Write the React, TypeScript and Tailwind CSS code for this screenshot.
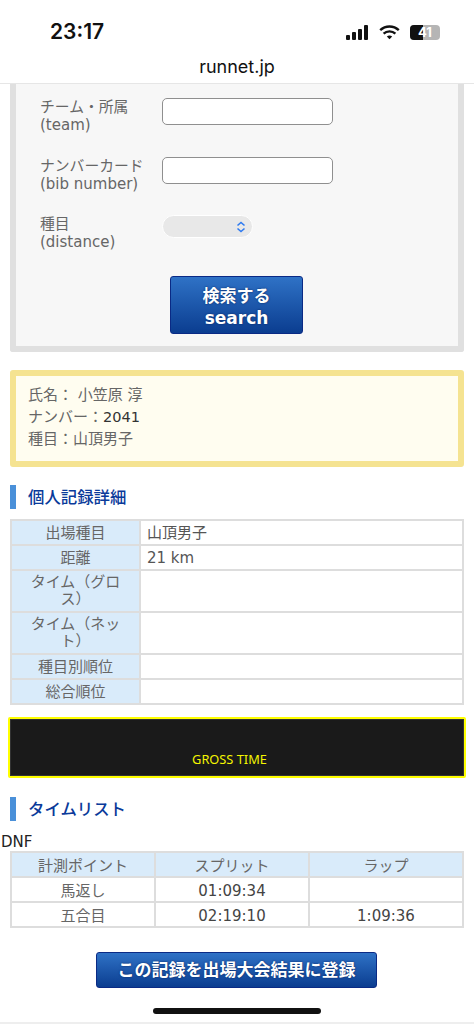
const cjk = "font-['DejaVu_Sans','Noto_Sans_CJK_JP',sans-serif]";

function StatusIcons() {
  return (
    <div className="mb-[3px] flex items-center gap-[10px]">
      <svg width="23" height="15" viewBox="0 0 23 15" fill="#111">
        <rect x="0" y="10" width="4" height="5" rx="1" />
        <rect x="6" y="7" width="4" height="8" rx="1" />
        <rect x="12" y="4" width="4" height="11" rx="1" />
        <rect x="18" y="0" width="4" height="15" rx="1" />
      </svg>
      <svg width="21" height="15" viewBox="0 0 21 15" fill="none" stroke="#111" strokeWidth="2.4">
        <path d="M1.2 5.2C6.5 0.3 14.5 0.3 19.8 5.2" />
        <path d="M4.6 8.6C7.9 5.6 13.1 5.6 16.4 8.6" />
        <path d="M10.5 14.2L7.8 11.4C9.4 10.2 11.6 10.2 13.2 11.4Z" fill="#111" stroke="none" />
      </svg>
      <div className="relative flex h-[15px] w-[30px] overflow-hidden rounded-[4px] bg-[#b5b5b5]">
        <div className="h-full w-[13px] bg-[#111]" />
        <span className="absolute inset-0 flex items-center justify-center font-['Inter',sans-serif] text-[13px] font-bold text-white">
          41
        </span>
      </div>
    </div>
  );
}

function FormRow({ label, sub, children }: { label: string; sub: string; children: React.ReactNode }) {
  return (
    <div className="flex h-[58.5px] items-start">
      <div className="-mt-[1px] w-[122px] text-[15px] leading-[19px] text-[#666]">
        <div className="text-[14.8px]">{label}</div>
        <div>{sub}</div>
      </div>
      {children}
    </div>
  );
}

function Heading({ title }: { title: string }) {
  return (
    <div className="mx-[10px] flex h-[24px] items-center border-l-[6px] border-[#4a90d9] pl-[12px] pt-[2px] text-[16.4px] font-medium text-[#0a3a9a]">
      {title}
    </div>
  );
}

const blueBtn =
  "block rounded-[3px] border border-[#0a2a85] bg-gradient-to-b from-[#2f72c6] to-[#0b3d90] text-center font-bold text-white [text-shadow:0_0_2px_#06245f]";

const detailRows: [string, string, boolean?][] = [
  ['出場種目', '山頂男子'],
  ['距離', '21 km'],
  ['タイム（グロス）', '', true],
  ['タイム（ネット）', '', true],
  ['種目別順位', ''],
  ['総合順位', ''],
];

const splits = [
  ['馬返し', '01:09:34', ''],
  ['五合目', '02:19:10', '1:09:36'],
];

export default function App() {
  return (
    <div className={`relative h-[1024px] overflow-hidden bg-white text-[15px] text-[#333] ${cjk}`}>
      {/* phone chrome */}
      <div className="flex h-[54px] items-end justify-between pl-[50px] pr-[34px] pb-[11px]">
        <span className="-mb-[1px] font-['Inter',sans-serif] text-[21px] font-semibold leading-[24px] text-[#111]">23:17</span>
        <StatusIcons />
      </div>
      <div className="flex h-[30px] justify-center border-b border-[#e6e6e6] font-['Inter',sans-serif] text-[18px] leading-[25px] text-[#111]">
        runnet.jp
      </div>

      {/* search form */}
      <div className="mx-[10px] h-[268px] rounded-b-[3px] border-x-[6px] border-b-[6px] border-[#e0e0e0] bg-[#f7f7f7] pl-[24px] pt-[14px]">
        <FormRow label="チーム・所属" sub="(team)">
          <input className="h-[27px] w-[171px] rounded-[5px] border border-[#8f8f8f] bg-white" />
        </FormRow>
        <FormRow label="ナンバーカード" sub="(bib number)">
          <input className="h-[27px] w-[171px] rounded-[5px] border border-[#8f8f8f] bg-white" />
        </FormRow>
        <FormRow label="種目" sub="(distance)">
          <div className="flex h-[23px] w-[91px] items-center justify-end rounded-full border border-white bg-[#e8e8e8] pr-[6px]">
            <svg width="10" height="12" viewBox="0 0 10 12" fill="none" stroke="#2f7bf0" strokeWidth="1.6">
              <path d="M1.5 4.5L5 1.5L8.5 4.5" />
              <path d="M1.5 7.5L5 10.5L8.5 7.5" />
            </svg>
          </div>
        </FormRow>
        <button className={`${blueBtn} ml-[130px] mt-[2px] h-[58px] w-[133px] pt-[4px] text-[17px] leading-[22px]`}>
          検索する
          <br />
          search
        </button>
      </div>

      {/* runner */}
      <div className="mx-[10px] mt-[18px] h-[97px] rounded-[3px] border-[6px] border-[#f5e391] bg-[#fffdf0] pl-[12px] pt-[8px] text-[15px] leading-[22px] text-[#666]">
        <div>氏名： 小笠原 淳</div>
        <div>ナンバー：<span className="text-[14.5px] text-[#333]">2041</span></div>
        <div>種目：山頂男子</div>
      </div>

      <div className="mt-[18px]">
        <Heading title="個人記録詳細" />
      </div>

      <table className="mx-[10px] mt-[10px] w-[454px] table-fixed border-collapse border-2 border-[#ddd] text-[15px]">
        <colgroup>
          <col className="w-[129px]" />
          <col />
        </colgroup>
        <tbody>
          {detailRows.map(([k, v, tall]) => (
            <tr key={k} className={tall ? 'h-[42px]' : 'h-[25px]'}>
              <th className={`border-2 border-[#ddd] bg-[#d9ebfa] px-[16px] text-center font-normal text-[#666] ${tall ? 'leading-[17px]' : 'leading-[20px]'}`}>
                {k}
              </th>
              <td className="border-2 border-[#ddd] px-[6px] leading-[20px] text-[#555]">{v}</td>
            </tr>
          ))}
        </tbody>
      </table>

      {/* gross time */}
      <div className="mx-[8px] mt-[12px] flex h-[61px] items-end justify-center rounded-[2px] border-2 border-[#ffff00] bg-[#1a1a1a] pb-[9px] pr-[15px] shadow-[inset_0_0_0_1px_#333]">
        <span className="font-['Noto_Sans',sans-serif] text-[12.8px] leading-[16px] text-[#f5f500]">GROSS TIME</span>
      </div>

      <div className="mt-[19px]">
        <Heading title="タイムリスト" />
      </div>

      <div className="ml-[1px] mt-[11px] h-[19px] text-[15px] leading-[20px] text-[#222]">DNF</div>

      <table className="mx-[10px] w-[454px] table-fixed border-collapse border-2 border-[#ddd] text-center text-[15px] leading-[20px]">
        <colgroup>
          <col className="w-[144px]" />
          <col className="w-[154px]" />
          <col />
        </colgroup>
        <thead>
          <tr className="h-[25px] bg-[#d9ebfa]">
            <th className="border-2 border-[#ddd] pt-[2px] font-normal text-[#666]">計測ポイント</th>
            <th className="border-2 border-[#ddd] pt-[2px] font-normal text-[#666]">スプリット</th>
            <th className="border-2 border-[#ddd] pt-[2px] font-normal text-[#666]">ラップ</th>
          </tr>
        </thead>
        <tbody>
          {splits.map((s) => (
            <tr key={s[0]} className="h-[25px]">
              <td className="border-2 border-[#ddd] pt-[2px] text-[#666]">{s[0]}</td>
              <td className="border-2 border-[#ddd] pt-[2px] text-[#444]">{s[1]}</td>
              <td className="border-2 border-[#ddd] pt-[2px] text-[#444]">{s[2]}</td>
            </tr>
          ))}
        </tbody>
      </table>

      <button className={`${blueBtn} ml-[96px] mt-[24px] h-[36px] w-[281px] text-[17px] leading-[34px]`}>
        この記録を出場大会結果に登録
      </button>

      {/* home indicator */}
      <div className="absolute left-[153px] top-[1008px] h-[6px] w-[168px] rounded-full bg-[#111]" />
      <div className="absolute bottom-0 left-0 right-0 h-[2px] bg-[#eee]" />
    </div>
  );
}
